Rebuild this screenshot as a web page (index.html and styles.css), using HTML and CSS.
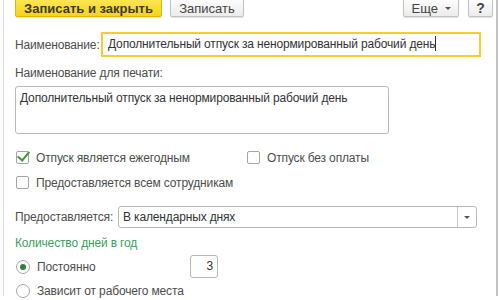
FILE: index.html
```html
<!DOCTYPE html>
<html lang="ru">
<head>
    <meta charset="UTF-8">
    <title>Вид отпуска</title>
    <link rel="stylesheet" href="styles.css">
</head>
<body>
<div class="form">
    <!--командная панель-->
    <div class="toolbar">
        <button class="btn btn_default">Записать и закрыть</button>
        <button class="btn btn_save">Записать</button>
        <span class="spacer"></span>
        <button class="btn btn_more">Еще <span class="caret"></span></button>
        <button class="btn btn_help">?</button>
    </div>

    <div class="row row_name">
        <label class="label">Наименование:</label>
        <div class="input input_active">Дополнительный отпуск за ненормированный рабочий день<span class="cursor"></span></div>
    </div>

    <div class="label label_top">Наименование для печати:</div>
    <div class="textarea">Дополнительный отпуск за ненормированный рабочий день</div>

    <div class="row row_checks">
        <div class="check check_wide"><span class="box box_on"></span>Отпуск является ежегодным</div>
        <div class="check"><span class="box"></span>Отпуск без оплаты</div>
    </div>
    <div class="row row_check2">
        <div class="check"><span class="box"></span>Предоставляется всем сотрудникам</div>
    </div>

    <div class="row row_select">
        <label class="label">Предоставляется:</label>
        <div class="select">
            <span class="select_text">В календарных днях</span>
            <span class="select_btn"><span class="caret"></span></span>
        </div>
    </div>

    <div class="group_title">Количество дней в год</div>
    <div class="row row_radio">
        <div class="radio radio_wide"><span class="circle circle_on"></span>Постоянно</div>
        <div class="number">3</div>
    </div>
    <div class="row row_radio2">
        <div class="radio"><span class="circle"></span>Зависит от рабочего места</div>
    </div>
</div>
</body>
</html>
```

FILE: styles.css
```css
*{
    margin: 0;
    padding: 0;
    box-sizing: border-box;
}
body{
    width: 500px;
    height: 300px;
    overflow: hidden;
    background: #ffffff;
    font-family: "Liberation Sans", Arial, sans-serif;
    font-size: 12px;
    letter-spacing: -0.15px;
    color: #4d4d4d;
}
.form{
    margin-left: 3px;
    width: 495px;
    height: 300px;
    border-left: 1px solid #dcdcdc;
    border-right: 2px solid #c4c4c4;
    padding-left: 11px;
}
.row{
    display: flex;
    align-items: center;
}

/*кнопки*/
.toolbar{
    display: flex;
    align-items: flex-start;
    margin-top: -4px;
    height: 21px;
}
.btn{
    height: 21px;
    border: 1px solid #c2c2c2;
    border-radius: 2px;
    background: linear-gradient(#ffffff, #ececec);
    font-family: "Liberation Sans", Arial, sans-serif;
    font-size: 13px;
    color: #444444;
    box-shadow: 0 1px 1px rgba(0,0,0,0.12);
    padding-top: 3px;
}
.btn_default{
    width: 147px;
    background: linear-gradient(#fde95a, #f4d41c);
    border-color: #d9b80c;
    font-weight: bold;
    color: #3c3a2a;
}
.btn_save{
    width: 74px;
    margin-left: 8px;
}
.spacer{
    flex: 1;
}
.btn_more{
    width: 56px;
}
.btn_help{
    width: 25px;
    margin-left: 9px;
    margin-right: 3px;
    font-weight: bold;
    font-size: 14px;
}
.caret{
    display: inline-block;
    width: 0;
    height: 0;
    border-left: 3px solid transparent;
    border-right: 3px solid transparent;
    border-top: 3px solid #555555;
    vertical-align: middle;
    margin-left: 3px;
    margin-bottom: 2px;
}

/*поля*/
.row_name{
    margin-top: 15px;
}
.row_name .label{
    width: 86px;
}
.input{
    width: 380px;
    height: 25px;
    line-height: 21px;
    padding-left: 5px;
    color: #333333;
    white-space: nowrap;
    overflow: hidden;
}
.input_active{
    border: 2px solid #f5cd2d;
}
.cursor{
    display: inline-block;
    width: 1px;
    height: 15px;
    background: #333333;
    vertical-align: -3px;
}
.label_top{
    margin-top: 9px;
    height: 18px;
}
.textarea{
    margin-top: 2px;
    width: 374px;
    height: 48px;
    border: 1px solid #b8b8b8;
    border-radius: 3px;
    padding: 4px 0 0 4px;
    color: #333333;
}

/*флажки*/
.row_checks{
    margin-top: 16px;
    height: 15px;
}
.row_check2{
    margin-top: 10px;
    height: 15px;
}
.check{
    display: flex;
    align-items: center;
}
.check_wide{
    width: 231px;
}
.box{
    position: relative;
    width: 13px;
    height: 13px;
    border: 1px solid #a6a6a6;
    border-radius: 2px;
    margin: 0 7px 0 1px;
    background: #ffffff;
}
.box_on::after{
    content: "";
    position: absolute;
    left: 3px;
    top: -3px;
    width: 5px;
    height: 10px;
    border-right: 2px solid #3f9a3c;
    border-bottom: 2px solid #3f9a3c;
    transform: rotate(40deg);
}

/*выбор*/
.row_select{
    margin-top: 16px;
}
.row_select .label{
    width: 103px;
}
.select{
    display: flex;
    width: 359px;
    height: 22px;
    border: 1px solid #b8b8b8;
    border-radius: 3px;
    color: #333333;
}
.select_text{
    flex: 1;
    line-height: 20px;
    padding-left: 4px;
}
.select_btn{
    width: 19px;
    border-left: 1px solid #c6c6c6;
    display: flex;
    align-items: center;
    justify-content: center;
}
.select_btn .caret{
    margin: 0;
}

.group_title{
    margin-top: 8px;
    color: #3d9f5a;
    height: 16px;
}

/*переключатели*/
.row_radio{
    margin-top: 3px;
}
.row_radio2{
    margin-top: 6px;
}
.radio{
    display: flex;
    align-items: center;
}
.radio_wide{
    width: 175px;
}
.circle{
    position: relative;
    width: 14px;
    height: 14px;
    border: 1px solid #a6a6a6;
    border-radius: 50%;
    margin: 0 7px 0 1px;
    background: #ffffff;
}
.circle_on::after{
    content: "";
    position: absolute;
    left: 3px;
    top: 3px;
    width: 6px;
    height: 6px;
    border-radius: 50%;
    background: #2f7d3f;
}
.number{
    width: 28px;
    height: 23px;
    border: 1px solid #b8b8b8;
    border-radius: 3px;
    text-align: right;
    line-height: 21px;
    padding-right: 4px;
    color: #333333;
}
```
